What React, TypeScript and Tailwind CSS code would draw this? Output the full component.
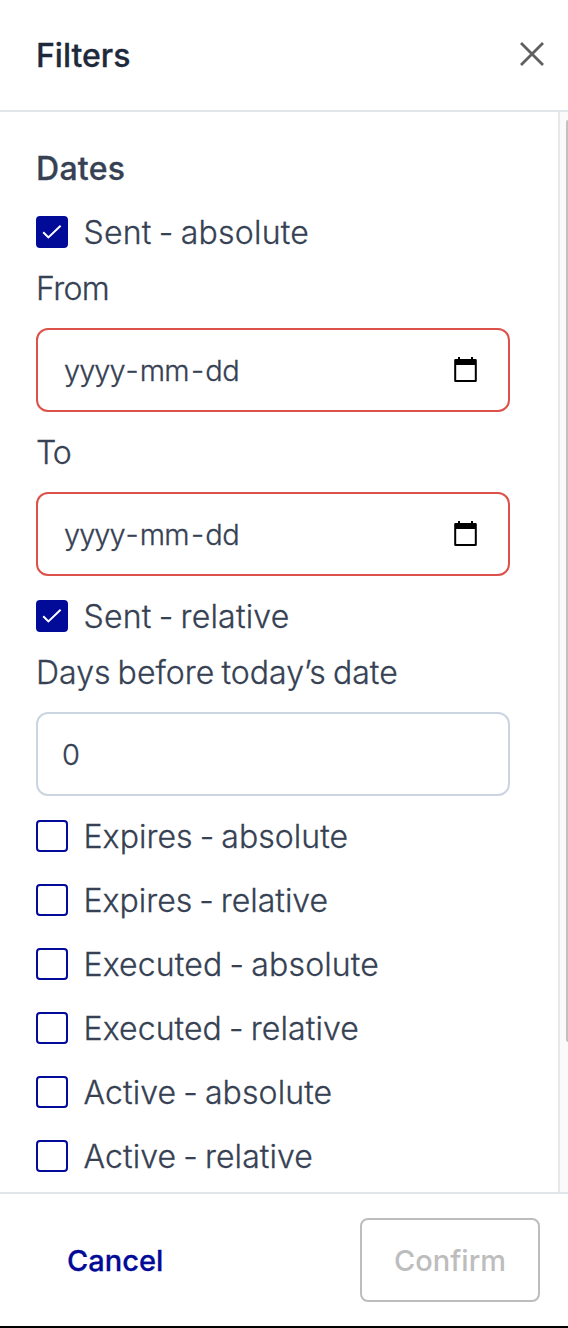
import React, { useState } from "react";
import clsx from "clsx";

const filters = [
    { id: "expires-abs", label: "Expires - absolute", tracking: "tracking-[0.05px]" },
    { id: "expires-rel", label: "Expires - relative", tracking: "tracking-[0px]" },
    { id: "executed-abs", label: "Executed - absolute", tracking: "tracking-[0.15px]" },
    { id: "executed-rel", label: "Executed - relative", tracking: "tracking-[0.1px]" },
    { id: "active-abs", label: "Active - absolute", tracking: "tracking-[0.1px]" },
    { id: "active-rel", label: "Active - relative", tracking: "tracking-[0.1px]" },
];

type CheckRowProps = {
    label: string;
    tracking: string;
    defaultChecked?: boolean;
};

const CheckRow = ({ label, tracking, defaultChecked = false }: CheckRowProps) => {
    const [checked, setChecked] = useState(defaultChecked);

    return (
        <button
            role="checkbox"
            aria-checked={checked}
            onClick={() => setChecked(!checked)}
            className="flex h-16 w-full items-center gap-[15.5px] text-left"
        >
            <span
                className={clsx(
                    "flex size-8 shrink-0 items-center justify-center rounded-[4px] border-2 border-[#020b97]",
                    checked && "bg-[#020b97]"
                )}
            >
                {checked && (
                    <svg width="20" height="16" viewBox="0 0 20 16" fill="none">
                        <path d="M1.2 8.2L6.4 13.4L18.6 1.8" stroke="white" strokeWidth="2" />
                    </svg>
                )}
            </span>
            <span className={clsx("pt-0.5 whitespace-nowrap [word-spacing:-2px]", tracking)}>{label}</span>
        </button>
    );
};

const DateField = ({ label, tracking }: { label: string; tracking: string }) => {
    return (
        <div>
            <div className={clsx("mb-4 h-12 leading-[50px]", tracking)}>{label}</div>
            <div className="flex h-[84px] w-[474px] items-center justify-between rounded-xl border-2 border-[#dc5149] pr-[30px] pl-[26px]">
                <span className="flex pt-0.5 text-[29px]">
                    <span className="tracking-[-1px]">yyyy</span>
                    <span className="px-px">-</span>
                    <span className="tracking-[-0.6px]">mm</span>
                    <span className="pr-px pl-0.5">-</span>
                    <span className="tracking-[-0.5px]">dd</span>
                </span>
                <svg width="24" height="26" viewBox="0 0 24 26">
                    <path
                        d="M4 0h2v2h11V0h2v2h2.5a1.3 1.3 0 0 1 1.3 1.3v20.4a1.3 1.3 0 0 1-1.3 1.3h-20a1.3 1.3 0 0 1-1.3-1.3V3.3A1.3 1.3 0 0 1 1.5 2H4zM2.2 8v15h18.6V8z"
                        fill="black"
                        fillRule="evenodd"
                    />
                </svg>
            </div>
        </div>
    );
};

const App = () => {
    return (
        <div className="flex h-[1328px] w-[568px] flex-col overflow-hidden border-b-2 border-black bg-white font-['Inter',sans-serif] text-[32px] font-light text-[#364153] [-webkit-text-stroke-width:0.3px]">
            <header className="flex h-28 shrink-0 items-center justify-between border-b-2 border-[#e1e6eb] pr-6 pl-9">
                <h1 className="pt-px text-[32px] font-medium tracking-[0px] text-[#1e293b]">Filters</h1>
                <button aria-label="Close" className="mb-0.5">
                    <svg width="24" height="24" viewBox="0 0 24 24" fill="none">
                        <path d="M1 1L23 23M23 1L1 23" stroke="#606060" strokeWidth="2.8" />
                    </svg>
                </button>
            </header>

            <main className="flex min-h-0 flex-1">
                <div className="flex-1 overflow-hidden pt-8 pl-9">
                    <h2 className="mb-2 h-12 text-[32px] leading-[50px] font-medium tracking-[0.3px]">Dates</h2>
                    <CheckRow label="Sent - absolute" tracking="tracking-[0.23px]" defaultChecked />
                    <DateField label="From" tracking="tracking-[-0.6px]" />
                    <div className="mt-4 mb-2">
                        <DateField label="To" tracking="tracking-[-1px]" />
                    </div>
                    <CheckRow label="Sent - relative" tracking="tracking-[0.2px]" defaultChecked />
                    <div className="mb-4 h-12 leading-[50px] tracking-[0.04px] [word-spacing:-2px]">
                        Days before today’s date
                    </div>
                    <div className="mb-2 flex h-[84px] w-[474px] items-center rounded-xl border-2 border-[#cbd5e1] pt-0.5 pl-6 text-[29px]">
                        0
                    </div>
                    {filters.map((f) => (
                        <CheckRow key={f.id} label={f.label} tracking={f.tracking} />
                    ))}
                </div>
                {/* scrollbar */}
                <div className="flex w-2.5 justify-end border-l-2 border-[#e8e8e8] bg-[#fafafa] pt-2">
                    <div className="h-[922px] w-0.5 rounded-l-full bg-[#c1c1c1]" />
                </div>
            </main>

            <footer className="flex h-[134px] shrink-0 items-start justify-between border-t-2 border-[#e1e6eb] pt-6 pr-7 pl-9 text-[29px]">
                <button className="h-[84px] px-[31px] pt-0.5 font-medium text-[#020b97]">Cancel</button>
                <button
                    disabled
                    className="h-[84px] w-[180px] rounded-lg border-2 border-[#bdbdbd] pt-0.5 font-medium text-[#bdbdbd] [-webkit-text-stroke-width:0px]"
                >
                    Confirm
                </button>
            </footer>
        </div>
    );
};

export default App;
